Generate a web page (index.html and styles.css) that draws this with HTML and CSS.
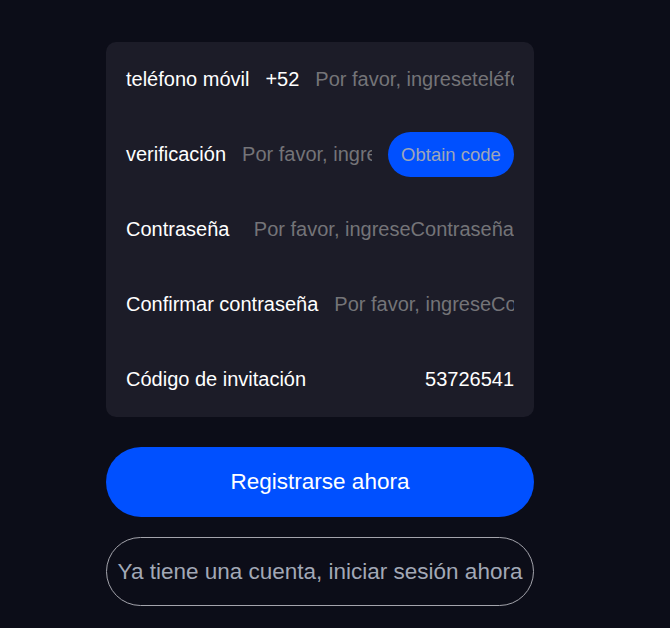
FILE: index.html
```html
<!DOCTYPE html>
<html lang="es">
<head>
<meta charset="utf-8">
<title>Registro</title>
<link rel="stylesheet" href="styles.css">
</head>
<body>
<main class="page">
  <form class="card">
    <div class="row">
      <span class="label">teléfono móvil</span>
      <span class="prefix">+52</span>
      <input class="field" type="tel" placeholder="Por favor, ingreseteléfono móvil">
    </div>
    <div class="row">
      <span class="label">verificación</span>
      <input class="field" type="text" placeholder="Por favor, ingreseverificación">
      <button type="button" class="code-btn">Obtain code</button>
    </div>
    <div class="row">
      <span class="label">Contraseña</span>
      <input class="field" type="password" placeholder="Por favor, ingreseContraseña">
    </div>
    <div class="row">
      <span class="label">Confirmar contraseña</span>
      <input class="field" type="password" placeholder="Por favor, ingreseConfirmar contraseña">
    </div>
    <div class="row">
      <span class="label">Código de invitación</span>
      <input class="field field-value" type="text" value="53726541">
    </div>
  </form>
  <button type="button" class="btn btn-primary">Registrarse ahora</button>
  <button type="button" class="btn btn-outline">Ya tiene una cuenta, iniciar sesión ahora</button>
</main>
</body>
</html>
```
FILE: styles.css
```css
* { box-sizing: border-box; }
html, body {
  margin: 0;
  padding: 0;
  background: #0c0d18;
  font-family: "Liberation Sans", Arial, sans-serif;
}
.page {
  width: 428px;
  margin-left: 106px;
  padding-top: 42px;
  display: flex;
  flex-direction: column;
}
.card {
  background: #1c1c28;
  border-radius: 10px;
  padding: 0 20px;
  margin: 0 0 30px;
}
.row {
  height: 75px;
  display: flex;
  align-items: center;
  gap: 16px;
}
.label, .prefix {
  color: #ffffff;
  font-size: 20px;
  white-space: nowrap;
  flex: none;
}
.field {
  flex: 1;
  min-width: 0;
  background: transparent;
  border: none;
  outline: none;
  padding: 0;
  font-family: inherit;
  font-size: 20px;
  color: #ffffff;
  text-align: right;
}
.field::placeholder { color: #747478; opacity: 1; }
.code-btn {
  flex: none;
  height: 45px;
  width: 126px;
  padding: 0;
  border: none;
  border-radius: 23px;
  background: #0050ff;
  color: #9ea6b8;
  font-family: inherit;
  font-size: 18.5px;
}
.btn {
  height: 70px;
  border-radius: 35px;
  font-family: inherit;
  font-size: 22.5px;
  padding: 0;
}
.btn-primary {
  background: #0050ff;
  color: #ffffff;
  border: none;
  margin-bottom: 20px;
}
.btn-outline {
  background: transparent;
  color: #a2a8b6;
  border: 1px solid #a4a4ac;
  height: 69px;
}
```
